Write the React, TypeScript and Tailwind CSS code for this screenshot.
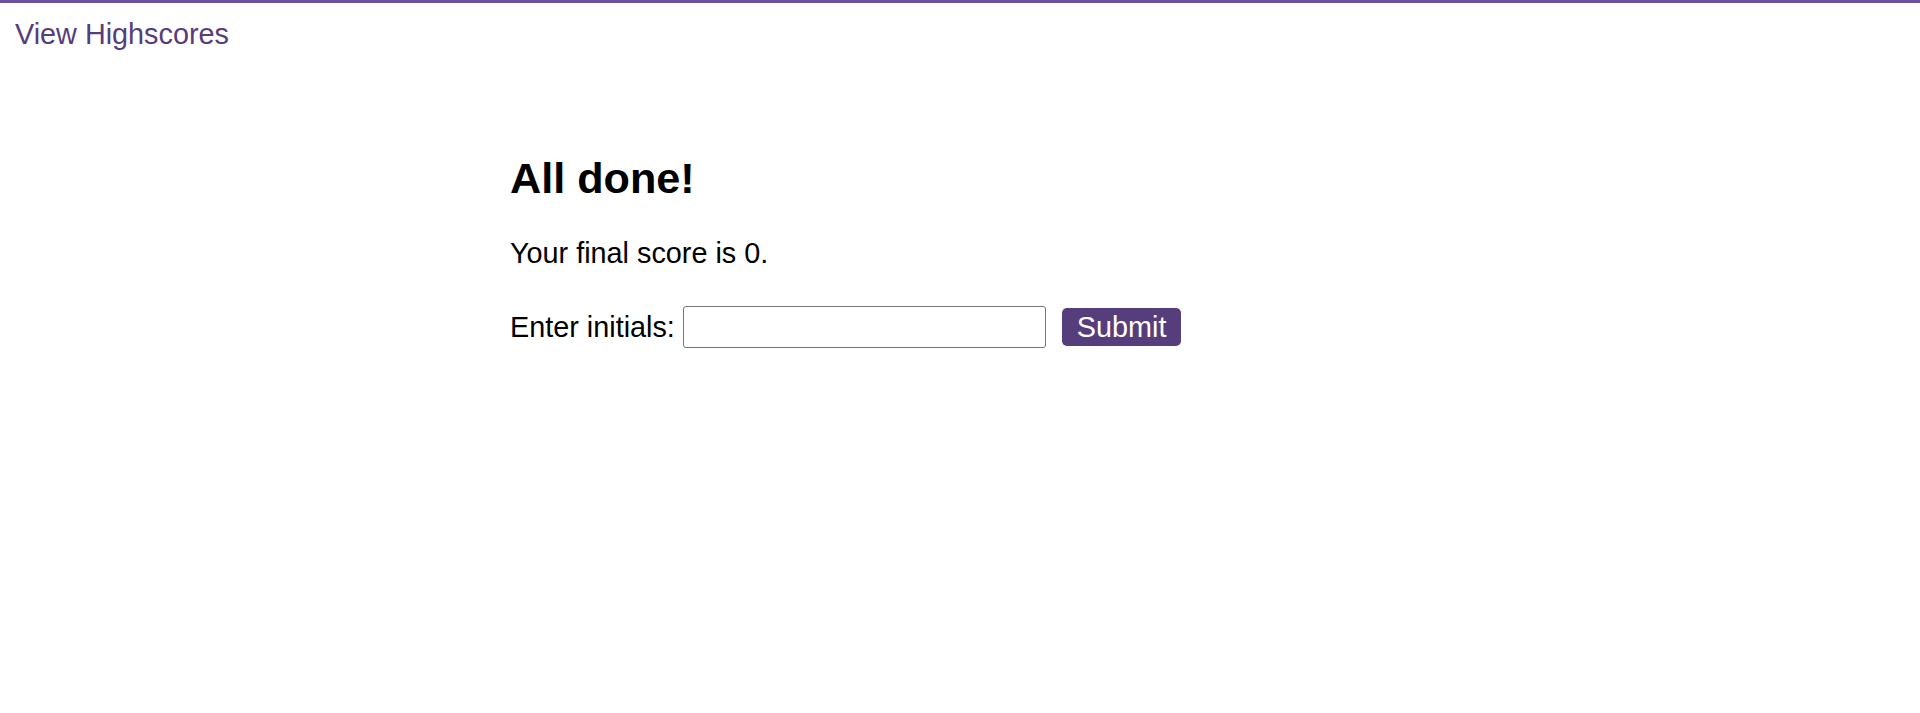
import React from "react";

export default function App() {
  return (
    <div className="min-h-[713px] bg-white text-black border-t-[3px] border-[#6b52a0] font-['Liberation_Sans',Arial,sans-serif]">
      <header className="px-[15px] pt-[15px]">
        <a href="#" className="text-[28.8px] leading-[32px] text-[#563d7c] no-underline">
          View Highscores
        </a>
      </header>
      <main className="w-[900px] mx-auto mt-[103px]">
        <h1 className="text-[43.2px] leading-[48px] font-bold">All done!</h1>
        <p className="mt-[35px] text-[28.8px] leading-[32px]">Your final score is 0.</p>
        <form className="mt-[37px] flex items-center" onSubmit={(e) => e.preventDefault()}>
          <label className="text-[28.8px] leading-[32px]">Enter initials:</label>
          <input
            type="text"
            className="ml-[8px] w-[363px] h-[42px] border border-[#767676] rounded-[3px] px-2 text-[28px] outline-none"
          />
          <button
            type="submit"
            className="ml-[16px] h-[38px] px-[15px] bg-[#563d7c] text-white text-[28.8px] leading-[32px] rounded-[5px]"
          >
            Submit
          </button>
        </form>
      </main>
    </div>
  );
}
